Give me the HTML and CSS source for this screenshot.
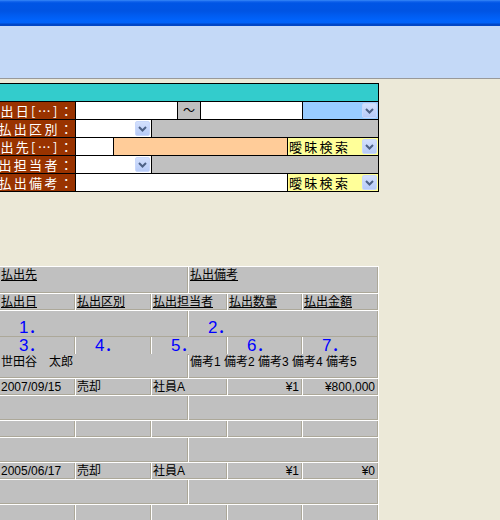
FILE: index.html
```html
<!DOCTYPE html>
<html lang="ja">
<head>
<meta charset="utf-8">
<title>払出検索</title>
<link rel="stylesheet" href="styles.css">
</head>
<body>
<div class="titlebar"></div>
<div class="band"></div>

<div class="form">
  <div class="fhead"></div>
  <div class="frow">
    <div class="flabel"><span>払出日[…]：</span></div>
    <div class="fcell white w102"></div>
    <div class="fcell tilde w23">～</div>
    <div class="fcell white w102"></div>
    <div class="fcell blue grow sel"><span class="dd"><svg width="13" height="13" viewBox="0 0 13 13"><polyline points="3,5 6.5,8.5 10,5" fill="none" stroke="#4d6185" stroke-width="2"/></svg></span></div>
  </div>
  <div class="frow">
    <div class="flabel"><span>払出区別：</span></div>
    <div class="fcell white w76 sel"><span class="dd"><svg width="13" height="13" viewBox="0 0 13 13"><polyline points="3,5 6.5,8.5 10,5" fill="none" stroke="#4d6185" stroke-width="2"/></svg></span></div>
    <div class="fcell gray grow"></div>
  </div>
  <div class="frow">
    <div class="flabel"><span>払出先[…]：</span></div>
    <div class="fcell white w38"></div>
    <div class="fcell orange w174"></div>
    <div class="fcell yellow grow sel split"><span class="ytext">曖昧検索</span><span class="dd"><svg width="13" height="13" viewBox="0 0 13 13"><polyline points="3,5 6.5,8.5 10,5" fill="none" stroke="#4d6185" stroke-width="2"/></svg></span></div>
  </div>
  <div class="frow">
    <div class="flabel"><span>払出担当者：</span></div>
    <div class="fcell white w76 sel"><span class="dd"><svg width="13" height="13" viewBox="0 0 13 13"><polyline points="3,5 6.5,8.5 10,5" fill="none" stroke="#4d6185" stroke-width="2"/></svg></span></div>
    <div class="fcell gray grow"></div>
  </div>
  <div class="frow last">
    <div class="flabel"><span>払出備考：</span></div>
    <div class="fcell white w212"></div>
    <div class="fcell yellow grow sel split"><span class="ytext">曖昧検索</span><span class="dd"><svg width="13" height="13" viewBox="0 0 13 13"><polyline points="3,5 6.5,8.5 10,5" fill="none" stroke="#4d6185" stroke-width="2"/></svg></span></div>
  </div>
</div>

<div class="grid">
  <div class="row two h26">
    <div class="c"><u>払出先</u></div>
    <div class="c"><u>払出備考</u></div>
  </div>
  <div class="row five h16">
    <div class="c"><u>払出日</u></div>
    <div class="c"><u>払出区別</u></div>
    <div class="c"><u>払出担当者</u></div>
    <div class="c"><u>払出数量</u></div>
    <div class="c"><u>払出金額</u></div>
  </div>
  <div class="row two h25">
    <div class="c num big">1．</div>
    <div class="c num big">2．</div>
  </div>
  <div class="row five h16">
    <div class="c num">3．</div>
    <div class="c num">4．</div>
    <div class="c num">5．</div>
    <div class="c num">6．</div>
    <div class="c num">7．</div>
  </div>
  <div class="row two h24">
    <div class="c">世田谷　太郎</div>
    <div class="c">備考1 備考2 備考3 備考4 備考5</div>
  </div>
  <div class="row five h16">
    <div class="c">2007/09/15</div>
    <div class="c">売却</div>
    <div class="c">社員A</div>
    <div class="c r">¥1</div>
    <div class="c r">¥800,000</div>
  </div>
  <div class="row two h24">
    <div class="c"></div>
    <div class="c"></div>
  </div>
  <div class="row five h16">
    <div class="c"></div>
    <div class="c"></div>
    <div class="c"></div>
    <div class="c"></div>
    <div class="c"></div>
  </div>
  <div class="row two h24">
    <div class="c"></div>
    <div class="c"></div>
  </div>
  <div class="row five h16">
    <div class="c">2005/06/17</div>
    <div class="c">売却</div>
    <div class="c">社員A</div>
    <div class="c r">¥1</div>
    <div class="c r">¥0</div>
  </div>
  <div class="row two h24">
    <div class="c"></div>
    <div class="c"></div>
  </div>
  <div class="row five h16">
    <div class="c"></div>
    <div class="c"></div>
    <div class="c"></div>
    <div class="c"></div>
    <div class="c"></div>
  </div>
</div>
</body>
</html>
```
FILE: styles.css
```css
html, body {
  margin: 0;
  padding: 0;
  overflow: hidden;
  height: 520px;
}
body {
  background: #ece9d8;
  font-family: "Liberation Sans", "Noto Sans CJK JP", sans-serif;
  font-size: 12px;
  color: #000;
}
.titlebar {
  height: 26px;
  background: linear-gradient(to bottom,
    #3d8ff8 0px, #1a6bf0 1px, #0055e5 3px, #0054e3 11px,
    #005bef 15px, #0063fb 20px, #0062f8 23px, #0046c6 24px, #0046c6 26px);
}
.band {
  height: 52px;
  background: #c4d9f7;
  border-bottom: 1px solid #999999;
}

/* search form */
.form {
  margin: 4px 0 0 -1px;
  width: 380px;
  box-sizing: border-box;
  border: 1px solid #000;
  font-family: "Noto Sans CJK JP", sans-serif;
}
.fhead {
  height: 17px;
  background: #33cccc;
  border-bottom: 1px solid #000;
}
.frow {
  display: flex;
  height: 18px;
  box-sizing: border-box;
  border-bottom: 1px solid #000;
}
.frow.last {
  height: 17px;
  border-bottom: none;
}
.flabel {
  width: 76px;
  flex: none;
  box-sizing: border-box;
  border-right: 1px solid #000;
  background: #993300;
  color: #fff;
  display: flex;
  justify-content: flex-end;
  overflow: hidden;
  white-space: nowrap;
  letter-spacing: 2.3px;
  line-height: 17px;
  font-size: 13px;
}
.fcell {
  flex: none;
  box-sizing: border-box;
  border-right: 1px solid #000;
  height: 17px;
}
.fcell.grow {
  flex: 1;
  border-right: none;
}
.w23 { width: 23px; }
.w38 { width: 38px; }
.w76 { width: 76px; }
.w102 { width: 102px; }
.w174 { width: 174px; }
.w212 { width: 212px; }
.white { background: #ffffff; }
.gray { background: #c0c0c0; }
.blue { background: #99ccff; }
.orange { background: #ffcc99; }
.yellow { background: #ffff99; }
.tilde {
  background: #c0c0c0;
  text-align: center;
  line-height: 15px;
  font-size: 12px;
}
.sel {
  display: flex;
  align-items: center;
  justify-content: flex-end;
  padding-right: 1px;
}
.sel.split {
  justify-content: space-between;
  padding-left: 1px;
}
.ytext {
  letter-spacing: 2.3px;
  font-size: 13px;
  line-height: 17px;
  white-space: nowrap;
}
.dd {
  width: 15px;
  height: 15px;
  box-sizing: border-box;
  border: 1px solid #c9d8fb;
  border-radius: 2px;
  background: linear-gradient(to bottom, #d3e0fd, #b7cbf7);
  display: flex;
  align-items: center;
  justify-content: center;
}
.dd svg { display: block; }

/* result grid */
.grid {
  margin: 74px 0 0 -1px;
  width: 380px;
  box-sizing: border-box;
  padding: 1px 1px 0 1px;
  background: #ffffff;
  display: flex;
  flex-direction: column;
  gap: 1px;
}
.row {
  display: grid;
  column-gap: 1px;
}
.row.two { grid-template-columns: 188px 189px; }
.row.five { grid-template-columns: 75px 75px 75px 74px 75px; }
.h26 { height: 26px; }
.h25 { height: 25px; }
.h24 { height: 24px; }
.h16 { height: 16px; }
.c {
  background: #c0c0c0;
  box-sizing: border-box;
  border-right: 1px solid #aca899;
  border-bottom: 1px solid #aca899;
  padding: 1px 2px 0 1px;
  line-height: 14px;
  white-space: nowrap;
  overflow: visible;
}
.c u {
  text-decoration-thickness: 1px;
  text-underline-offset: 1px;
}
.c.r { text-align: right; }
.c.num {
  color: #0000ff;
  font-size: 17px;
  line-height: 16px;
  padding: 1px 0 0 19px;
}
.c.num.big {
  padding-top: 9px;
}
```
